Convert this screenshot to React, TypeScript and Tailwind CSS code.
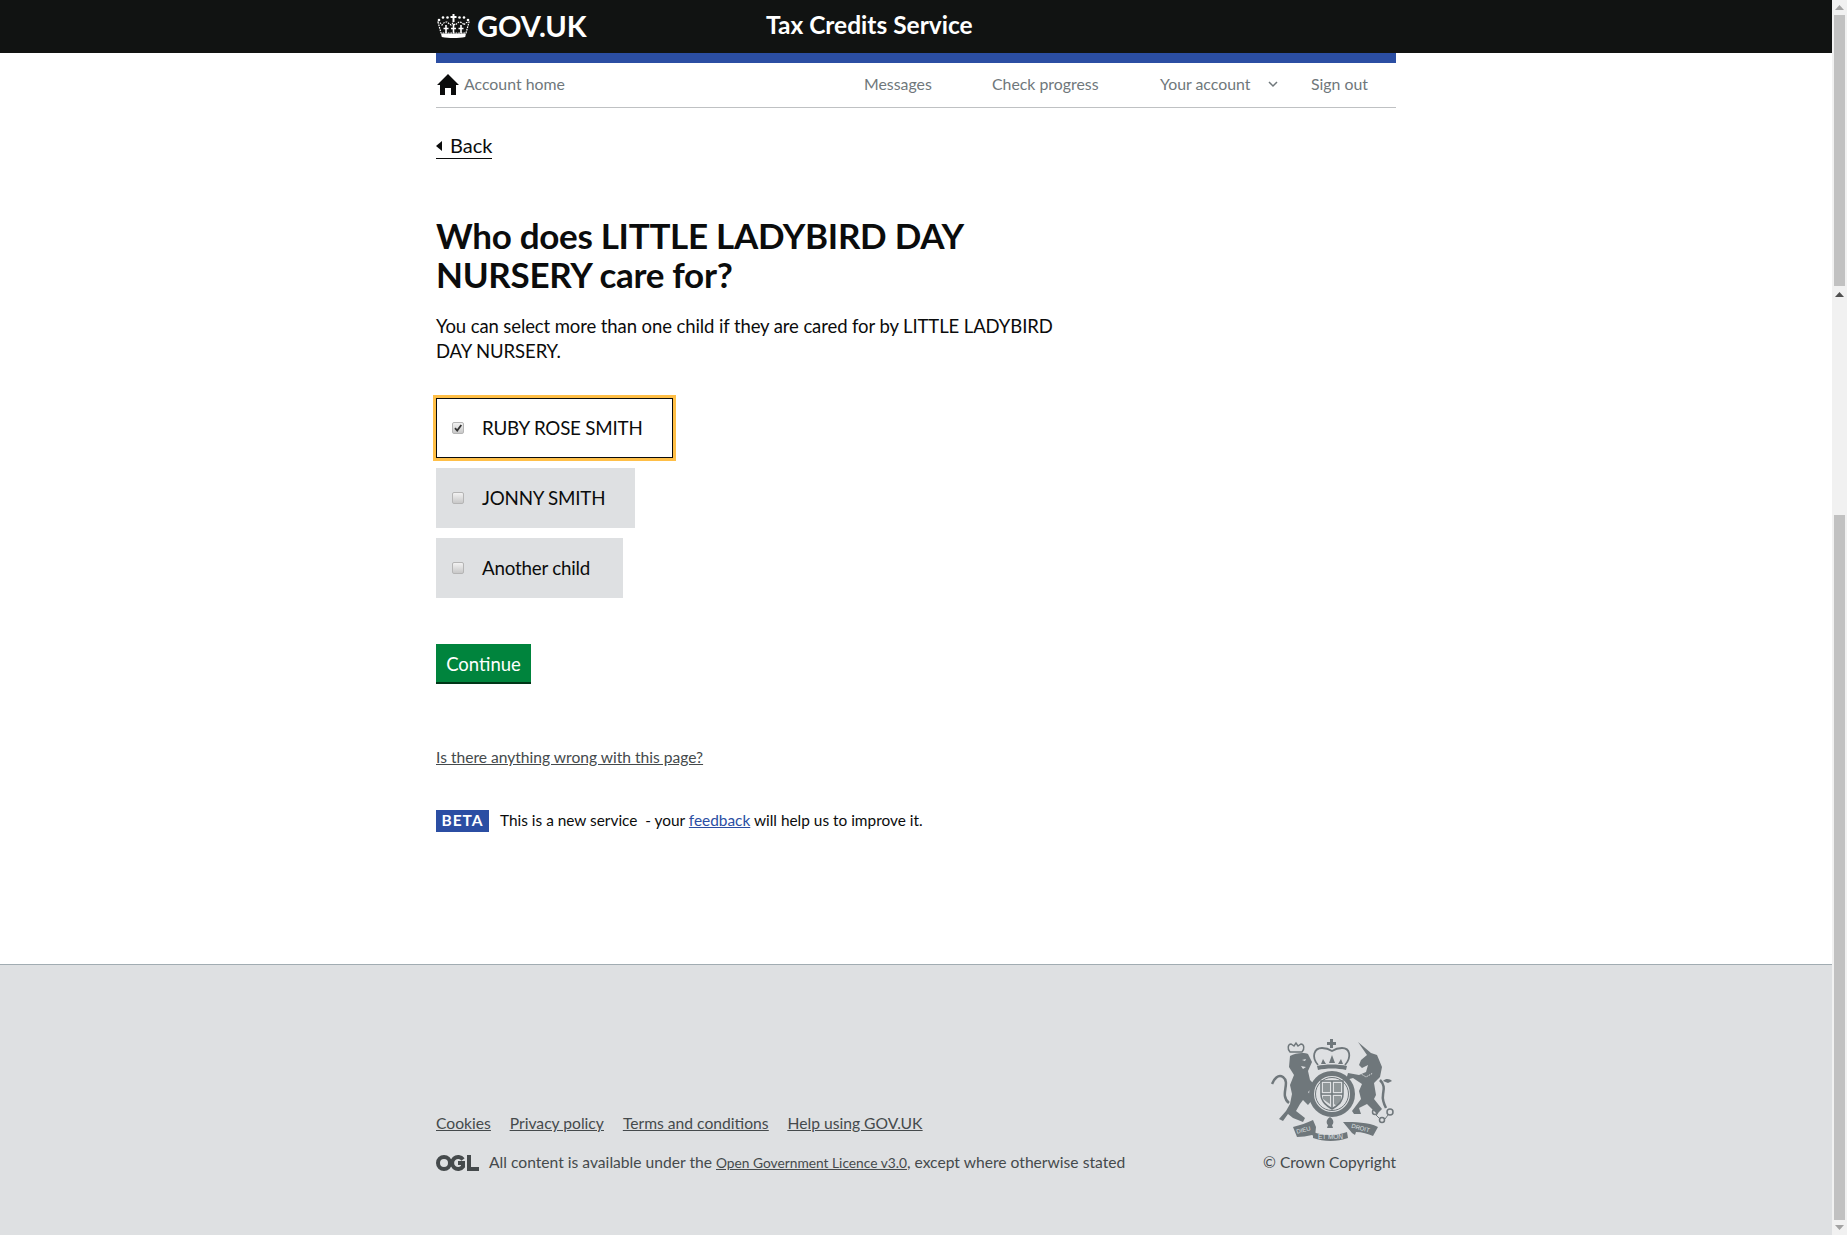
import React from 'react';

const Crown = () => (
  <svg width="35" height="24" viewBox="0 0 35 24" fill="#fff" className="shrink-0">
    <path d="M16.5 0h2v2h2v2h-2v4h-2V4h-2V2h2z" />
    <circle cx="3" cy="6" r="1.3" /><circle cx="7" cy="3.5" r="1.3" /><circle cx="11.5" cy="3.5" r="1.3" />
    <circle cx="23.5" cy="3.5" r="1.3" /><circle cx="28" cy="3.5" r="1.3" /><circle cx="32" cy="6" r="1.3" />
    <path d="M2 8l3 11h25l3-11c-2 0-4 1-5 3-1-2-3-3-5-3l-4 3-2-2-2 2-4-3c-2 0-4 1-5 3-1-2-3-3-4-3z" fill="none" stroke="#fff" strokeWidth="1.2" strokeDasharray="1.6 1" />
    <path d="M10 11v8M17.5 10v9M25 11v8M7.5 14.5h5M15 14.5h5M22.5 14.5h5" stroke="#fff" strokeWidth="1.6" />
    <path d="M5 19.5h25l-.8 3.5c-7 1.300-16.400 1.300-23.400 0z" />
  </svg>
);

const House = () => (
  <svg width="22" height="21" viewBox="0 0 22 21" fill="#0b0c0c" className="ml-px shrink-0">
    <path d="M11 0 22 11h-3v10h-5v-7H8v7H3V11H0z" />
  </svg>
);

const Ogl = () => (
  <svg width="43" height="18" viewBox="0 0 43 18" fill="none" className="shrink-0">
    <circle cx="8" cy="9" r="6" stroke="#454a4c" strokeWidth="4" />
    <path d="M27 5.500A6 6 0 1 0 27 12.500V9h-5" stroke="#454a4c" strokeWidth="4" />
    <path d="M33 1v14h10" stroke="#454a4c" strokeWidth="4" />
  </svg>
);

const Crest = () => (
  <svg width="125" height="104" viewBox="0 0 125 104" fill="#6f777b" stroke="none" className="shrink-0">
    {/* centre crown */}
    <path d="M59 2h3v3h3v3h-3v3h-3V8h-3V5h3z" />
    <path d="M47 28c-7-8-4-17 4-17 4 0 7 1 10 3 3-2 6-3 10-3 8 0 10 9 3 17" fill="none" stroke="#6f777b" strokeWidth="1.800" />
    <path d="M46 29c8-2 21-2 30 0l-1 4c-8-2-20-2-28 0z" />
    <path d="M50 27l2-5 3 5zM58 26l3-8 3 8zM67 27l3-5 2 5z" />
    {/* garter and shield */}
    <circle cx="61" cy="57" r="20.500" fill="none" stroke="#6f777b" strokeWidth="5" />
    <circle cx="61" cy="57" r="16.500" fill="none" stroke="#6f777b" strokeWidth="1" />
    <path d="M50 44h22v13c0 8-6 12-11 15-5-3-11-7-11-15z" fill="none" stroke="#6f777b" strokeWidth="1.500" />
    <path d="M61 44v28M50 57h22" stroke="#6f777b" strokeWidth="1.500" />
    <path d="M52 46h7v9h-7zM63 46h7v9h-7zM63 59h7v7l-4 3-3-2zM52 59h7v8l-3-2-4-3z" opacity="0.7" />
    {/* lion */}
    <path d="M19 15c-3-3-2-8 1-8l3 2 2-3 2 3 3-2c3 0 4 5 1 8z" fill="none" stroke="#6f777b" strokeWidth="1.500" />
    <path d="M19 19C24 16 33 15 37 17L41 25 37 34 39 43 44 48 37 55 42 62 37 68 32 63 29 67 25 74 34 81 32 85 22 81 17 77 12 84 8 82 15 74 19 67 21 57 19 48 23 38 18 30Z" strokeLinejoin="round" />
    <path d="M18 66C8 58 20 46 12 40 7 37 3 42 1 47" fill="none" stroke="#6f777b" strokeWidth="2.500" />
    <path d="M31 23l4-1-1 2zM30 29l5 1-3 2z" fill="#dee0e2" />
    {/* unicorn */}
    <path d="M90 23 96 18 87 5 100 16 106 18 111 30 109 40 103 46 105 58 103 62 111 72 106 77 96 67 88 71 90 77 83 77 81 74 90 62 88 54 91 47 82 41 75 43 77 36 88 38 95 35 97 28 91 31 88 28Z" strokeLinejoin="round" />
    <path d="M109 43c6 6 3 11 3 15-1 5 1 9 3 13" fill="none" stroke="#6f777b" strokeWidth="2.500" />
    <path d="M112 44c3-3 7-2 9 0l-4 2z" />
    <path d="M87 35l8 5 7-4" fill="none" stroke="#dee0e2" strokeWidth="1" strokeDasharray="1.500 1" />
    <circle cx="119" cy="75" r="3" fill="none" stroke="#6f777b" strokeWidth="1.500" />
    <circle cx="104" cy="75" r="2.500" fill="none" stroke="#6f777b" strokeWidth="1.500" />
    <circle cx="111" cy="83" r="2.500" fill="none" stroke="#6f777b" strokeWidth="1.500" />
    <path d="M104 77l4 4M114 82l3-4" stroke="#6f777b" strokeWidth="1" />
    {/* motto */}
    <path d="M22 90c7-2 14-4 20-7l3 7-1 10-3-2c-5 1-10 2-15 2z" />
    <path d="M72 85c12 0 25 0 35 5l-5 9c-5-2-11-4-17-4l-1 3-3-2z" />
    <path d="M42 95c10 4 24 4 34 0l1 6c-11 4-24 4-35 0z" />
    <path d="M59 80c3 2 4 4 3 7l-1 1 1 3h-6l1-3-1-1c-1-3 0-5 3-7z" />
    <text x="59.500" y="102" textAnchor="middle" fontSize="6.500" fill="#dee0e2" fontFamily="Liberation Sans, sans-serif">ET MON</text>
    <text x="33" y="95" textAnchor="middle" fontSize="6" fill="#dee0e2" fontFamily="Liberation Sans, sans-serif" transform="rotate(-15 33 95)">DIEU</text>
    <text x="89" y="93" textAnchor="middle" fontSize="6" fill="#dee0e2" fontFamily="Liberation Sans, sans-serif" transform="rotate(15 89 93)">DROIT</text>
  </svg>
);

const Check = ({ on }: { on?: boolean }) => (
  <span className="flex h-3 w-3 shrink-0 items-center justify-center rounded-[2px] border border-[#b5b5b5] bg-gradient-to-b from-[#f2f2f2] to-[#c8c8c8]">
    {on && (
      <svg width="10" height="10" viewBox="0 0 10 10" fill="none">
        <path d="M2 5.200 4.200 7.500 8.300 2" stroke="#333" strokeWidth="1.800" />
      </svg>
    )}
  </span>
);

const Option = ({ label, on, w }: { label: string; on?: boolean; w: string }) => (
  <div className={`flex h-[60px] items-center gap-[18px] text-[18.75px] tracking-[-0.2px] text-[#0b0c0c] ${w} ${on ? 'border border-[#0b0c0c] pl-[15px] outline-3 outline-[#ffbf47]' : 'bg-[#dee0e2] pl-4'}`}>
    <Check on={on} />
    <span>{label}</span>
  </div>
);

const ScrollArrow = ({ down, dark }: { down?: boolean; dark?: boolean }) => (
  <svg width="9" height="5" viewBox="0 0 9 5" className={`shrink-0 ${dark ? 'fill-[#505050]' : 'fill-[#a3a3a3]'} ${down ? 'rotate-180' : ''}`}>
    <path d="M4.500 0 9 5H0z" />
  </svg>
);

const Scrollbar = () => (
  <aside className="flex w-[15px] shrink-0 flex-col items-center bg-[#f1f1f1] pt-[5px]">
    <ScrollArrow />
    <div className="mt-[5px] h-[271px] w-[11px] shrink-0 bg-[#c1c1c1]" />
    <div className="mt-[6px]"><ScrollArrow dark /></div>
    <div className="mt-[218px] h-[705px] w-[11px] shrink-0 bg-[#c1c1c1]" />
    <div className="mt-[5px]"><ScrollArrow down /></div>
  </aside>
);

const navLink = 'text-[15.85px] leading-5 text-[#6f777b]';

export default function App() {
  return (
    <div className="flex h-[1235px] overflow-hidden bg-white font-['Lato',sans-serif]">
      <div className="flex min-w-0 flex-1 flex-col">
        <header className="h-[53px] shrink-0 bg-[#111312]">
          <div className="mx-auto flex h-full w-[960px] items-center pb-[2px]">
            <Crown />
            <span className="ml-[6px] w-[289px] text-[29px] leading-none font-bold text-white">GOV.UK</span>
            <span className="text-[24.5px] leading-none font-bold text-white">Tax Credits Service</span>
          </div>
        </header>

        <main className="mx-auto flex w-[960px] flex-1 flex-col">
          <div className="h-[10px] bg-[#2b4ea3]" />
          <nav className="flex h-[45px] items-center border-b border-[#bfc1c3] pb-[2px]">
            <House />
            <a className={`ml-[5px] w-[400px] ${navLink}`}>Account home</a>
            <a className={`w-[128px] ${navLink}`}>Messages</a>
            <a className={`w-[168px] ${navLink}`}>Check progress</a>
            <a className={`w-[108px] ${navLink}`}>Your account</a>
            <svg width="10" height="7" viewBox="0 0 10 7" fill="none" className="mr-[33px]">
              <path d="M1 1l4 4 4-4" stroke="#6f777b" strokeWidth="1.500" />
            </svg>
            <a className={navLink}>Sign out</a>
          </nav>

          <a className="mt-[25px] flex w-fit items-center gap-2 border-b border-[#0b0c0c] text-[20px] leading-[25px] text-[#0b0c0c]">
            <span className="h-0 w-0 border-y-[5px] border-r-[6px] border-y-transparent border-r-[#0b0c0c]" />
            Back
          </a>

          <h1 className="mt-[57px] w-[640px] text-[35px] leading-[39px] font-bold tracking-[-0.3px] text-[#0b0c0c]">
            Who does LITTLE LADYBIRD DAY NURSERY care for?
          </h1>
          <p className="mt-5 w-[640px] text-[18.5px] leading-[25px] tracking-[-0.1px] text-[#0b0c0c]">
            You can select more than one child if they are cared for by LITTLE LADYBIRD DAY NURSERY.
          </p>

          <div className="mt-[34px] flex flex-col gap-[10px]">
            <Option label="RUBY ROSE SMITH" on w="w-[237px]" />
            <Option label="JONNY SMITH" w="w-[199px]" />
            <Option label="Another child" w="w-[187px]" />
          </div>

          <button className="mt-[46px] h-[38px] w-[95px] bg-[#00843d] pt-[3px] text-[18.5px] text-white shadow-[0_2px_0_#003618]">Continue</button>

          <a className="mt-[65px] w-fit text-[15.6px] leading-5 text-[#454a4c] underline">Is there anything wrong with this page?</a>

          <div className="mt-[42px] flex items-center text-[15.4px] text-[#0b0c0c]">
            <span className="flex h-[22px] w-[53px] items-center justify-center bg-[#2b4ea3] text-[15.5px] font-bold tracking-[1px] text-white">BETA</span>
            <span className="ml-[11px] whitespace-pre">This is a new service  - your <a className="text-[#2b4ea3] underline">feedback</a> will help us to improve it.</span>
          </div>
        </main>

        <footer className="h-[271px] shrink-0 border-t border-[#a1acb2] bg-[#dee0e2]">
          <div className="mx-auto flex h-full w-[960px] items-end justify-between pb-[62px]">
            <div className="flex flex-col gap-[19px]">
              <div className="flex gap-[19px] text-[15.65px] leading-5 text-[#454a4c] underline">
                <a>Cookies</a>
                <a>Privacy policy</a>
                <a>Terms and conditions</a>
                <a>Help using GOV.UK</a>
              </div>
              <div className="flex items-center text-[15.65px] leading-5 text-[#454a4c]">
                <Ogl />
                <span className="ml-[10px]">All content is available under the <a className="text-[13.75px] underline">Open Government Licence v3.0</a>, except where otherwise stated</span>
              </div>
            </div>
            <div className="mb-px flex flex-col items-end gap-[11px]">
              <Crest />
              <span className="text-[15.5px] leading-5 text-[#454a4c]">© Crown Copyright</span>
            </div>
          </div>
        </footer>
      </div>
      <Scrollbar />
    </div>
  );
}
